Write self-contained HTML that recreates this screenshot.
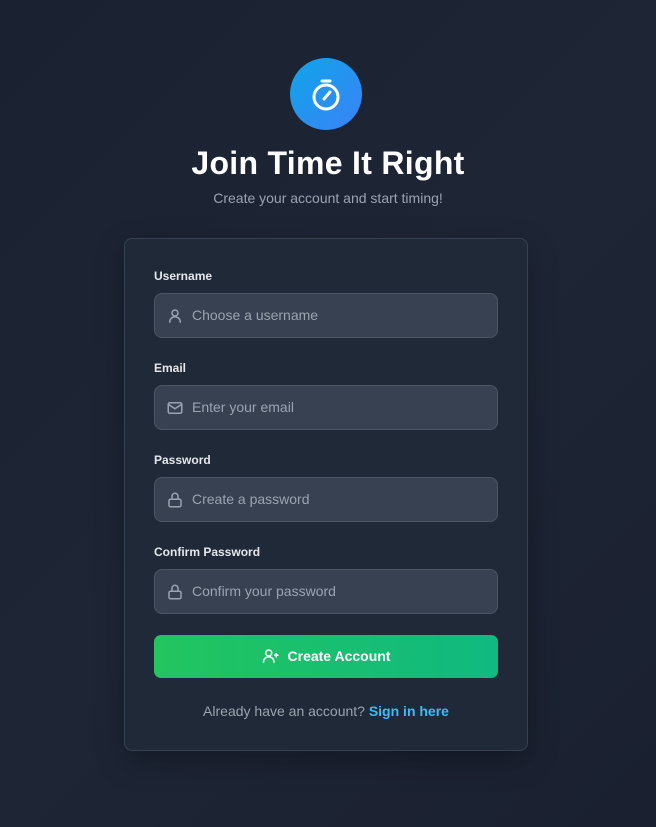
<!DOCTYPE html>
<html><head><meta charset="utf-8"><style>
*{box-sizing:border-box;margin:0;padding:0}
body{width:656px;height:827px;overflow:hidden;background:linear-gradient(135deg,#1a2130 0%,#1e2636 50%,#1a2030 100%);font-family:"Liberation Sans",sans-serif;position:relative}
.logo{position:absolute;left:290px;top:58px;width:72px;height:72px;border-radius:50%;background:linear-gradient(135deg,#0ea5e9,#3b82f6)}
h1{position:absolute;top:145px;left:0;width:656px;text-align:center;color:#fff;font-size:32px;font-weight:bold;letter-spacing:0.3px}
.sub{position:absolute;top:190px;left:0;width:656px;text-align:center;color:#9ca3af;font-size:14px}
.card{position:absolute;left:124px;top:238px;width:404px;height:513px;background:#1f2937;border:1px solid #374151;border-radius:8px;box-shadow:0 10px 30px rgba(0,0,0,.3)}
.lbl{position:absolute;left:154px;color:#e5e7eb;font-size:12px;font-weight:bold}
.inp{position:absolute;left:154px;width:344px;height:45px;background:#374151;border:1px solid #4b5563;border-radius:8px;color:#9ca3af;font-size:14px;line-height:43px;padding-left:37px}
.inp svg{position:absolute;left:11px;top:13px}
.btn{position:absolute;left:154px;top:635px;width:344px;height:43px;border-radius:7px;background:linear-gradient(90deg,#22c55e,#10b981);color:#fff;font-weight:bold;font-size:14px;line-height:43px;text-align:center}
.foot{position:absolute;top:703px;left:124px;width:404px;text-align:center;color:#9ca3af;font-size:14px}
.foot b{color:#38bdf8}
</style></head><body>
<div class="logo"><svg width="72" height="72" viewBox="0 0 72 72" fill="none" stroke="#fff" stroke-width="3" stroke-linecap="round"><circle cx="36" cy="39" r="12"/><line x1="32" y1="23" x2="40" y2="23"/><line x1="34" y1="41" x2="40" y2="34"/></svg></div>
<h1>Join Time It Right</h1>
<div class="sub">Create your account and start timing!</div>
<div class="card"></div>
<div class="lbl" style="top:269px">Username</div>
<div class="inp" style="top:293px"><svg width="18" height="18" viewBox="0 0 24 24" fill="none" stroke="#9ca3af" stroke-width="2"><circle cx="12" cy="8" r="4"/><path d="M5 21v-1a6 6 0 0 1 14 0v1"/></svg>Choose a username</div>
<div class="lbl" style="top:361px">Email</div>
<div class="inp" style="top:385px"><svg width="18" height="18" viewBox="0 0 24 24" fill="none" stroke="#9ca3af" stroke-width="2"><rect x="3" y="5" width="18" height="14" rx="2"/><path d="M3 7l9 6 9-6"/></svg>Enter your email</div>
<div class="lbl" style="top:453px">Password</div>
<div class="inp" style="top:477px"><svg width="18" height="18" viewBox="0 0 24 24" fill="none" stroke="#9ca3af" stroke-width="2"><rect x="4" y="11" width="16" height="10" rx="2"/><path d="M8 11V7a4 4 0 0 1 8 0v4"/></svg>Create a password</div>
<div class="lbl" style="top:545px">Confirm Password</div>
<div class="inp" style="top:569px"><svg width="18" height="18" viewBox="0 0 24 24" fill="none" stroke="#9ca3af" stroke-width="2"><rect x="4" y="11" width="16" height="10" rx="2"/><path d="M8 11V7a4 4 0 0 1 8 0v4"/></svg>Confirm your password</div>
<div class="btn"><svg width="18" height="18" viewBox="0 0 24 24" fill="none" stroke="#fff" stroke-width="2" style="vertical-align:-4px;margin-right:8px"><circle cx="9" cy="8" r="4"/><path d="M2 21v-1a7 7 0 0 1 14 0v1M19 8v6M16 11h6"/></svg>Create Account</div>
<div class="foot">Already have an account? <b>Sign in here</b></div>
</body></html>
